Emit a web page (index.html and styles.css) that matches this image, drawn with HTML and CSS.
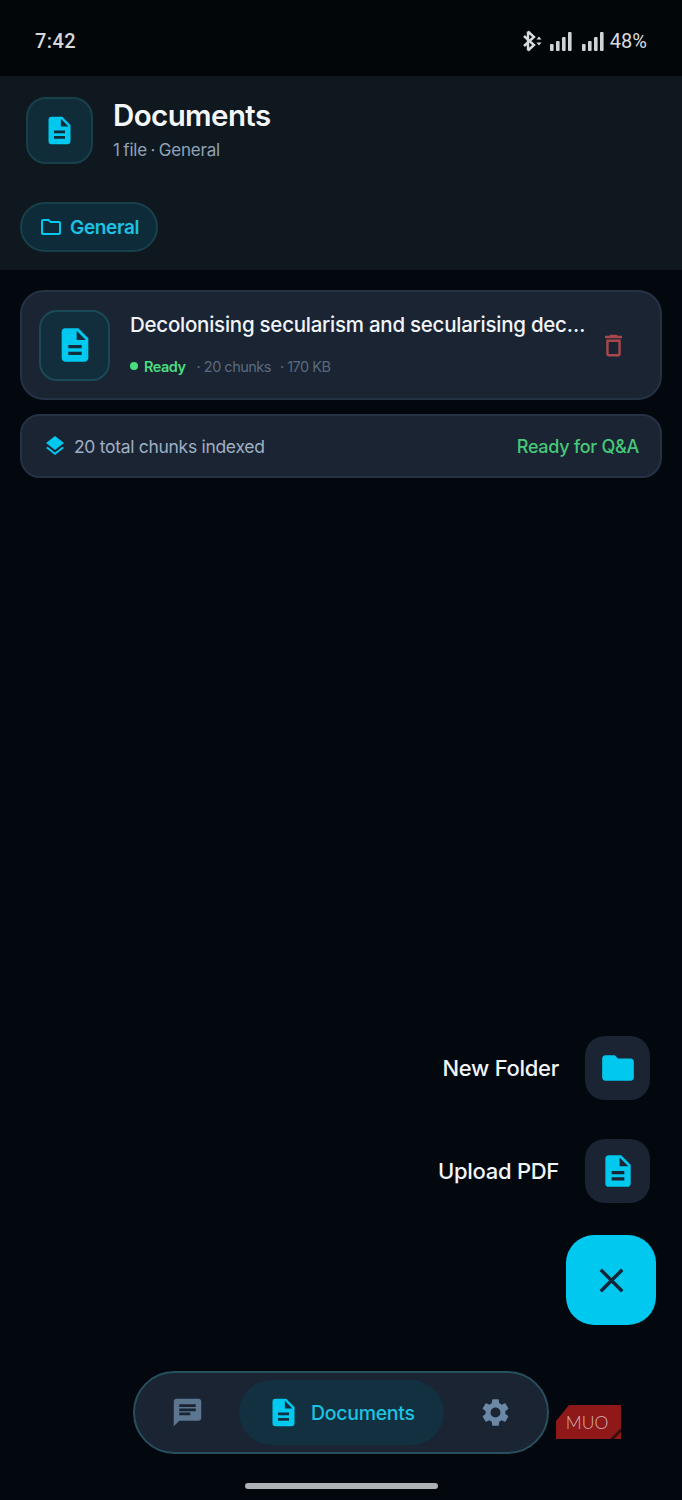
FILE: index.html
```html
<!DOCTYPE html>
<html lang="en">
<head>
<meta charset="utf-8">
<title>Documents</title>
<link rel="stylesheet" href="styles.css">
</head>
<body>
<svg class="defs" width="0" height="0" aria-hidden="true">
  <symbol id="i-doc" viewBox="0 0 24 24"><path d="M14 2H6c-1.1 0-2 .9-2 2v16c0 1.1.9 2 2 2h12c1.1 0 2-.9 2-2V8l-6-6zm2 16H8v-2h8v2zm0-4H8v-2h8v2zm-3-5V3.5L18.5 9H13z"/></symbol>
  <symbol id="i-folder" viewBox="0 0 24 24"><path d="M10 4H4c-1.1 0-2 .9-2 2v12c0 1.1.9 2 2 2h16c1.1 0 2-.9 2-2V8c0-1.1-.9-2-2-2h-8l-2-2z"/></symbol>
  <symbol id="i-folder-o" viewBox="0 0 24 24"><path d="M9.17 6l2 2H20v10H4V6h5.17M10 4H4c-1.1 0-1.99.9-1.99 2L2 18c0 1.1.9 2 2 2h16c1.1 0 2-.9 2-2V8c0-1.1-.9-2-2-2h-8l-2-2z"/></symbol>
  <symbol id="i-trash" viewBox="0 0 24 24"><path d="M16 9v10H8V9h8m-1.5-6h-5l-1 1H5v2h14V4h-3.5l-1-1zM18 7H6v12c0 1.1.9 2 2 2h8c1.1 0 2-.9 2-2V7z"/></symbol>
  <symbol id="i-layers" viewBox="0 0 24 24"><path d="M11.99 18.54l-7.37-5.73L3 14.07l9 7 9-7-1.63-1.27-7.38 5.74zM12 16l7.36-5.73L21 9l-9-7-9 7 1.63 1.27L12 16z"/></symbol>
  <symbol id="i-chat" viewBox="0 0 24 24"><path d="M20 2H4c-1.1 0-1.99.9-1.99 2L2 22l4-4h14c1.1 0 2-.9 2-2V4c0-1.1-.9-2-2-2zM6 9h12v2H6V9zm8 5H6v-2h8v2zm4-6H6V6h12v2z"/></symbol>
  <symbol id="i-gear" viewBox="0 0 24 24"><path d="M19.14 12.94c.04-.3.06-.61.06-.94 0-.32-.02-.64-.07-.94l2.03-1.58c.18-.14.23-.41.12-.61l-1.92-3.32c-.12-.22-.37-.29-.59-.22l-2.39.96c-.5-.38-1.03-.7-1.62-.94l-.36-2.54c-.04-.24-.24-.41-.48-.41h-3.84c-.24 0-.43.17-.47.41l-.36 2.54c-.59.24-1.13.57-1.62.94l-2.39-.96c-.22-.08-.47 0-.59.22L2.74 8.87c-.12.21-.08.47.12.61l2.03 1.58c-.05.3-.09.63-.09.94s.02.64.07.94l-2.03 1.58c-.18.14-.23.41-.12.61l1.92 3.32c.12.22.37.29.59.22l2.39-.96c.5.38 1.03.7 1.62.94l.36 2.54c.05.24.24.41.48.41h3.84c.24 0 .44-.17.47-.41l.36-2.54c.59-.24 1.13-.56 1.62-.94l2.39.96c.22.08.47 0 .59-.22l1.92-3.32c.12-.22.07-.47-.12-.61l-2.01-1.58zM12 15.6c-1.98 0-3.6-1.62-3.6-3.6s1.62-3.6 3.6-3.6 3.6 1.62 3.6 3.6-1.62 3.6-3.6 3.6z"/></symbol>
  <symbol id="i-close" viewBox="0 0 24 24"><path d="M19 6.41L17.59 5 12 10.59 6.41 5 5 6.41 10.59 12 5 17.59 6.41 19 12 13.41 17.59 19 19 17.59 13.41 12z"/></symbol>
</svg>

<div class="page">
  <div class="status">
    <span class="time">7:42</span>
    <div class="status-right">
      <svg class="bt" viewBox="0 0 21 24" width="21" height="24"><path d="M7 2.5 13 8 3 17M7 21.5 13 16 3 7M7 2.5v19" fill="none" stroke="#d9dcdf" stroke-width="2.4"/><path d="M15.5 10.5h5l-2.5-3zM15.5 13.5h5l-2.5 3z" fill="#d9dcdf"/></svg>
      <svg class="sig" viewBox="0 0 22 19" width="22" height="19"><g fill="#d0d3d6"><rect x="0" y="12" width="3.6" height="7" rx="1"/><rect x="6" y="9" width="3.6" height="10" rx="1"/><rect x="12" y="5" width="3.6" height="14" rx="1"/><rect x="18" y="0" width="3.6" height="19" rx="1"/></g></svg>
      <svg class="sig" viewBox="0 0 22 19" width="22" height="19"><g fill="#d0d3d6"><rect x="0" y="12" width="3.6" height="7" rx="1"/><rect x="6" y="9" width="3.6" height="10" rx="1"/><rect x="12" y="5" width="3.6" height="14" rx="1"/><rect x="18" y="0" width="3.6" height="19" rx="1"/></g></svg>
      <span class="battery">48%</span>
    </div>
  </div>

  <header class="header">
    <div class="title-row">
      <div class="title-icon"><svg class="ic ic-33"><use href="#i-doc"/></svg></div>
      <div class="title-text">
        <h1 class="title">Documents</h1>
        <p class="subtitle">1 file · General</p>
      </div>
    </div>
    <div class="chips">
      <div class="chip"><svg class="ic ic-24"><use href="#i-folder-o"/></svg><span>General</span></div>
    </div>
  </header>

  <main class="list">
    <article class="file-card">
      <div class="file-icon"><svg class="ic ic-40"><use href="#i-doc"/></svg></div>
      <div class="file-body">
        <div class="file-name">Decolonising secularism and secularising decolonisation in India</div>
        <div class="file-meta">
          <span class="dot"></span><span class="ready">Ready</span>
          <span class="meta">· 20 chunks</span><span class="meta">· 170 KB</span>
        </div>
      </div>
      <svg class="ic-trash"><use href="#i-trash"/></svg>
    </article>
    <div class="summary">
      <svg class="ic ic-24"><use href="#i-layers"/></svg>
      <span class="summary-text">20 total chunks indexed</span>
      <span class="summary-ready">Ready for Q&amp;A</span>
    </div>
  </main>

  <div class="fab-stack">
    <div class="fab-row">
      <span class="fab-label">New Folder</span>
      <div class="fab-mini"><svg class="ic ic-38"><use href="#i-folder"/></svg></div>
    </div>
    <div class="fab-row">
      <span class="fab-label">Upload PDF</span>
      <div class="fab-mini"><svg class="ic ic-38"><use href="#i-doc"/></svg></div>
    </div>
    <div class="fab"><svg class="ic-close"><use href="#i-close"/></svg></div>
  </div>

  <nav class="nav">
    <svg class="nav-icon ic-chat"><use href="#i-chat"/></svg>
    <div class="nav-active"><svg class="ic ic-33"><use href="#i-doc"/></svg><span>Documents</span></div>
    <svg class="nav-icon ic-gear"><use href="#i-gear"/></svg>
  </nav>

  <div class="home-bar"></div>

  <div class="muo">
    <svg class="muo-bg" viewBox="0 0 65 34" width="65" height="34"><path d="M13 0H65V34H0V16Z" fill="#8f1818"/><path d="M65 23V27L58 34H54Z" fill="#3a0d0e"/></svg>
    <span class="muo-text">MUO</span>
  </div>
</div>
</body>
</html>
```
FILE: styles.css
```css
* { box-sizing: border-box; }
html, body { margin: 0; padding: 0; background: #03080e; }
body { font-family: Inter, "Liberation Sans", sans-serif; color: #f1f5f9; }
.defs { position: absolute; }
.page { position: relative; height: 1500px; width: 682px; display: flex; flex-direction: column; overflow: hidden; background: #03080e; }

.ic { fill: #00c8ee; flex: none; }
.ic-24 { width: 24px; height: 24px; }
.ic-33 { width: 33px; height: 33px; }
.ic-38 { width: 38px; height: 38px; }
.ic-40 { width: 40px; height: 40px; }

.status { height: 76px; flex: none; background: #030609; display: flex; align-items: center; justify-content: space-between; padding: 6px 35px 0; }
.time { font: 500 20px Roboto, sans-serif; color: #d5d8db; letter-spacing: .4px; }
.status-right { display: flex; align-items: center; }
.bt { margin-right: 8px; }
.sig { margin-right: 10px; }
.sig + .sig { margin-right: 6px; }
.battery { font: 400 20px Roboto, sans-serif; color: #d9dcdf; }

.header { flex: none; height: 194px; background: #10181f; padding: 21px 20px 0; }
.title-row { display: flex; align-items: center; gap: 20px; padding-left: 6px; }
.title-icon { width: 67px; height: 67px; border-radius: 20px; background: #0f2c38; border: 2px solid #17404b; display: flex; align-items: center; justify-content: center; }
.title { margin: 0; font-size: 29.5px; line-height: 30px; font-weight: 600; letter-spacing: -.6px; color: #f4f7fa; }
.subtitle { margin: 8px 0 0; font-size: 17px; line-height: 24px; font-weight: 400; color: #8fa3b8; letter-spacing: -.2px; word-spacing: -1px; }
.chips { display: flex; margin-top: 38px; }
.chip { height: 50px; width: 138px; border-radius: 25px; background: #0d2b38; border: 2px solid #17404b; display: flex; align-items: center; gap: 7px; padding-left: 17px; color: #1cc3e3; font-size: 19px; font-weight: 600; letter-spacing: -.35px; }

.list { flex: none; padding: 20px 20px 0; display: flex; flex-direction: column; gap: 14px; }
.file-card { height: 110px; border-radius: 24px; background: #1a2433; border: 2px solid #243244; display: flex; align-items: center; padding: 0 32px 0 17px; }
.file-icon { width: 71px; height: 71px; flex: none; border-radius: 18px; background: #122d3c; border: 2px solid #1a4a58; display: flex; align-items: center; justify-content: center; }
.file-body { flex: 1; min-width: 0; margin-left: 20px; margin-right: 12px; padding-bottom: 3px; }
.file-name { font-size: 20.5px; line-height: 28px; font-weight: 500; color: #f1f5f9; white-space: nowrap; overflow: hidden; text-overflow: ellipsis; letter-spacing: -.25px; }
.file-meta { display: flex; align-items: center; margin-top: 17px; height: 20px; font-size: 14.5px; letter-spacing: -.5px; }
.dot { width: 8px; height: 8px; border-radius: 50%; background: #4ade80; margin-right: 6px; }
.ready { color: #4ade80; font-weight: 600; margin-right: 11px; }
.meta { color: #5b6a7e; margin-right: 9px; }
.ic-trash { width: 29px; height: 29px; flex: none; fill: #a8484c; }

.summary { height: 64px; border-radius: 20px; background: #1a2433; border: 2px solid #243244; display: flex; align-items: center; padding: 0 21px; font-size: 17.5px; letter-spacing: -.3px; }
.summary-text { margin-left: 7px; color: #9fb0c4; flex: 1; }
.summary-ready { color: #46c878; font-weight: 500; font-size: 18px; }

.fab-stack { margin-top: auto; padding-right: 26px; display: flex; flex-direction: column; align-items: flex-end; }
.fab-row { display: flex; align-items: center; gap: 26px; margin-right: 6px; margin-bottom: 39px; }
.fab-row + .fab-row { margin-bottom: 32px; }
.fab-label { font-size: 22px; font-weight: 500; color: #f1f5f9; letter-spacing: -.28px; }
.fab-mini { width: 65px; height: 64px; border-radius: 20px; background: #1a2433; display: flex; align-items: center; justify-content: center; }
.fab { width: 90px; height: 90px; border-radius: 28px; background: #00c8ee; display: flex; align-items: center; justify-content: center; }
.ic-close { width: 41px; height: 41px; fill: #12263a; }

.nav { flex: none; align-self: center; width: 416px; height: 83px; margin-top: 46px; margin-bottom: 46px; border-radius: 42px; background: #1a2433; border: 2px solid #27505f; display: flex; align-items: center; padding-left: 36px; }
.nav-icon { fill: #5c7690; flex: none; }
.ic-chat { width: 33px; height: 33px; margin-right: 35px; }
.ic-gear { width: 33px; height: 33px; margin-left: 35px; fill: #6b88a5; }
.nav-active { width: 205px; height: 65px; flex: none; border-radius: 33px; background: #12303f; display: flex; align-items: center; padding-left: 28px; gap: 11px; color: #1cc3e3; font-size: 19.5px; font-weight: 500; letter-spacing: -.3px; }

.home-bar { position: absolute; left: 245px; top: 1483px; width: 193px; height: 6px; border-radius: 3px; background: #b0b3b6; }

.muo { position: absolute; left: 556px; top: 1405px; width: 65px; height: 34px; display: flex; align-items: center; justify-content: center; padding-right: 3px; }
.muo-bg { position: absolute; inset: 0; }
.muo-text { position: relative; font: 300 17.5px Lato, sans-serif; color: #d3b3b3; }
```
